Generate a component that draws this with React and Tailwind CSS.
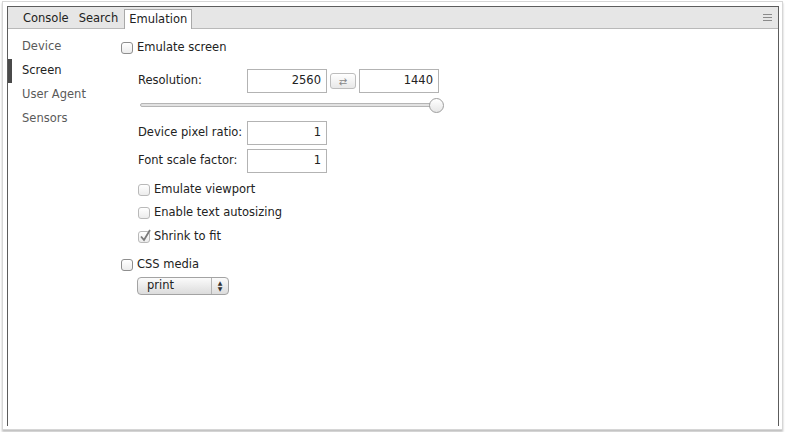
const font = { fontFamily: '"DejaVu Sans", "Liberation Sans", sans-serif' };

function Box({ checked, dim }) {
  return (
    <span
      className={`relative mr-[4px] inline-block h-[12px] w-[12px] shrink-0 rounded-[3px] border bg-gradient-to-b from-white to-[#ececec] ${
        dim ? "border-[#b9b9b9]" : "border-[#8e8e8e]"
      }`}
    >
      {checked && (
        <svg className="absolute left-[0px] top-[-3px]" width="13" height="13" viewBox="0 0 13 13">
          <path d="M2 7.5 L5 11 L11 1" fill="none" stroke="#7a7a7a" strokeWidth="1.8" />
        </svg>
      )}
    </span>
  );
}

function Check({ label, checked, dim, className = "" }) {
  return (
    <div className={`flex h-[20px] items-center ${className}`}>
      <Box checked={checked} dim={dim} />
      <span className="text-[#222]">{label}</span>
    </div>
  );
}

function Field({ value }) {
  return (
    <div className="flex h-[24px] w-[80px] items-center justify-end border border-[#b3b3b3] bg-white pr-[5px] text-[#222]">
      {value}
    </div>
  );
}

export default function App() {
  const tabs = ["Console", "Search"];
  const side = ["Device", "Screen", "User Agent", "Sensors"];

  return (
    <div className="h-[432px] w-[786px] bg-white pb-[2px] pl-[2px] pr-[3px] pt-[1px] text-[11.5px]" style={font}>
      <div className="h-full border border-[#d6d6d6] pb-[3px] pl-[4px] pr-[3px] pt-[4px] shadow-[0_2px_2px_rgba(0,0,0,0.25)]">
        <div className="flex h-full flex-col border-l border-r border-t border-[#5c5c5c]">
          {/* tab strip */}
          <div className="flex h-[22px] items-end border-b border-[#b9b9b9] bg-[#e6e6e6] pl-[10px]">
            {tabs.map((t) => (
              <div key={t} className="flex h-[19px] items-center px-[5px] pt-[1px] text-[#222]">
                {t}
              </div>
            ))}
            <div className="mb-[-1px] ml-[1px] flex h-[20px] items-center border border-b-0 border-[#a9a9a9] bg-white px-[4px] pt-[1px] text-[#222]">
              Emulation
            </div>
            <div className="ml-auto mr-[6px] flex h-full flex-col justify-center gap-[2px] pb-[1px]">
              <span className="block h-[1px] w-[9px] bg-[#8a8a8a]" />
              <span className="block h-[1px] w-[9px] bg-[#8a8a8a]" />
              <span className="block h-[1px] w-[9px] bg-[#8a8a8a]" />
            </div>
          </div>

          <div className="flex flex-1">
            {/* sidebar */}
            <div className="w-[113px] pt-[6px]">
              {side.map((s) => (
                <div
                  key={s}
                  className={`flex h-[24px] items-center border-l-[4px] pl-[10px] ${
                    s === "Screen" ? "border-[#4a4a4a] text-[#222]" : "border-transparent text-[#5a5a5a]"
                  }`}
                >
                  {s}
                </div>
              ))}
            </div>

            {/* content */}
            <div className="flex flex-col pt-[9px]">
              <Check label="Emulate screen" />

              <div className="ml-[17px] mt-[11px] flex items-center">
                <span className="w-[109px] text-[#222]">Resolution:</span>
                <Field value="2560" />
                <div className="mx-[3px] flex h-[16px] w-[26px] items-center justify-center rounded-[3px] border border-[#bdbdbd] bg-gradient-to-b from-white to-[#e8e8e8] text-[10px] text-[#888]">
                  ⇄
                </div>
                <Field value="1440" />
              </div>

              <div className="ml-[19px] mt-[3px] flex h-[18px] w-[304px] items-center">
                <div className="h-[4px] flex-1 rounded-full border border-[#b5b5b5] bg-[#e2e2e2]" />
                <div className="ml-[-8px] h-[15px] w-[15px] rounded-full border border-[#9d9d9d] bg-gradient-to-b from-white to-[#e6e6e6]" />
              </div>

              <div className="ml-[17px] mt-[7px] flex items-center">
                <span className="w-[109px] text-[#222]">Device pixel ratio:</span>
                <Field value="1" />
              </div>
              <div className="ml-[17px] mt-[4px] flex items-center">
                <span className="w-[109px] text-[#222]">Font scale factor:</span>
                <Field value="1" />
              </div>

              <Check className="ml-[17px] mt-[7px]" label="Emulate viewport" dim />
              <Check className="ml-[17px] mt-[3px]" label="Enable text autosizing" dim />
              <Check className="ml-[17px] mt-[4px]" label="Shrink to fit" checked dim />

              <Check className="mt-[8px]" label="CSS media" />
              <div className="ml-[16px] mt-[2px] flex h-[18px] w-[92px] items-center rounded-[4px] border border-[#a3a3a3] bg-gradient-to-b from-[#fbfbfb] to-[#dcdcdc] text-[#222]">
                <span className="flex-1 pl-[9px]">print</span>
                <span className="flex h-full w-[17px] flex-col items-center justify-center border-l border-[#b3b3b3] text-[6px] leading-[6px] text-[#333]">
                  <span>▲</span>
                  <span>▼</span>
                </span>
              </div>
            </div>
          </div>
        </div>
      </div>
    </div>
  );
}
